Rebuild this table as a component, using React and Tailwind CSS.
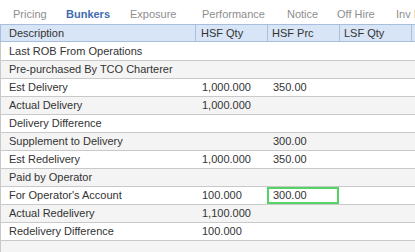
const tabs = [
  { label: 'Pricing', w: 'w-[53px]' },
  { label: 'Bunkers', w: 'w-[64px]', active: true },
  { label: 'Exposure', w: 'w-[72px]' },
  { label: 'Performance', w: 'w-[85px]' },
  { label: 'Notice', w: 'w-[50px]' },
  { label: 'Off Hire', w: 'w-[59px]' },
  { label: 'Inv Info', w: 'w-[60px]' },
]

const rows = [
  { desc: 'Last ROB From Operations' },
  { desc: 'Pre-purchased By TCO Charterer' },
  { desc: 'Est Delivery', qty: '1,000.000', prc: '350.00' },
  { desc: 'Actual Delivery', qty: '1,000.000' },
  { desc: 'Delivery Difference' },
  { desc: 'Supplement to Delivery', prc: '300.00' },
  { desc: 'Est Redelivery', qty: '1,000.000', prc: '350.00' },
  { desc: 'Paid by Operator' },
  { desc: "For Operator's Account", qty: '100.000', prc: '300.00', editing: true },
  { desc: 'Actual Redelivery', qty: '1,100.000' },
  { desc: 'Redelivery Difference', qty: '100.000' },
]

export default function App() {
  return (
    <div className="w-[415px] h-[252px] overflow-hidden bg-white text-[11px] text-[#333] font-['Liberation_Sans',Arial,sans-serif]">
      {/* tab strip */}
      <div className="h-[24px] flex items-end whitespace-nowrap overflow-hidden">
        <div className="flex shrink-0 pb-[2px] pl-[13px]">
          {tabs.map(t => (
            <div key={t.label} className={`relative shrink-0 ${t.w}`}>
              {t.active && <div className="absolute left-[-10px] w-[62px] top-[-9px] h-[2px] bg-[#4a7cc9]" />}
              <span className={t.active ? 'font-bold text-[#3f6cb0]' : 'text-[#8e8e8e]'}>{t.label}</span>
            </div>
          ))}
        </div>
      </div>

      {/* header */}
      <div className="flex h-[18px] border-y border-l border-[#a9bedd] bg-[#d7e5f6]">
        <div className="w-[195px] pl-[8px] border-r border-[#a9bedd] flex items-center">Description</div>
        <div className="w-[72px] pl-[5px] border-r border-[#a9bedd] flex items-center">HSF Qty</div>
        <div className="w-[72px] pl-[4px] border-r border-[#a9bedd] flex items-center">HSF Prc</div>
        <div className="w-[72px] pl-[4px] border-r border-[#a9bedd] flex items-center">LSF Qty</div>
        <div className="flex-1" />
      </div>

      {/* body */}
      <div className="border-l border-[#c9c9c9]">
        {rows.map((r, i) => (
          <div
            key={r.desc}
            className={`flex border-b border-[#c9c9c9] ${i === 0 ? 'h-[19px]' : 'h-[18px]'} ${i % 2 ? 'bg-[#f4f4f4]' : 'bg-white'}`}
          >
            <div className="w-[195px] pl-[8px] flex items-center">{r.desc}</div>
            <div className="w-[72px] pl-[6px] flex items-center">{r.qty}</div>
            {r.editing ? (
              <div className="w-[72px] -ml-[1px] mr-[1px] border-2 border-[#55d466] pl-[4px] flex items-center bg-white">{r.prc}</div>
            ) : (
              <div className="w-[72px] pl-[5px] flex items-center">{r.prc}</div>
            )}
            <div className="flex-1" />
          </div>
        ))}
        <div className="h-[12px] bg-[#f4f4f4]" />
      </div>
    </div>
  )
}
